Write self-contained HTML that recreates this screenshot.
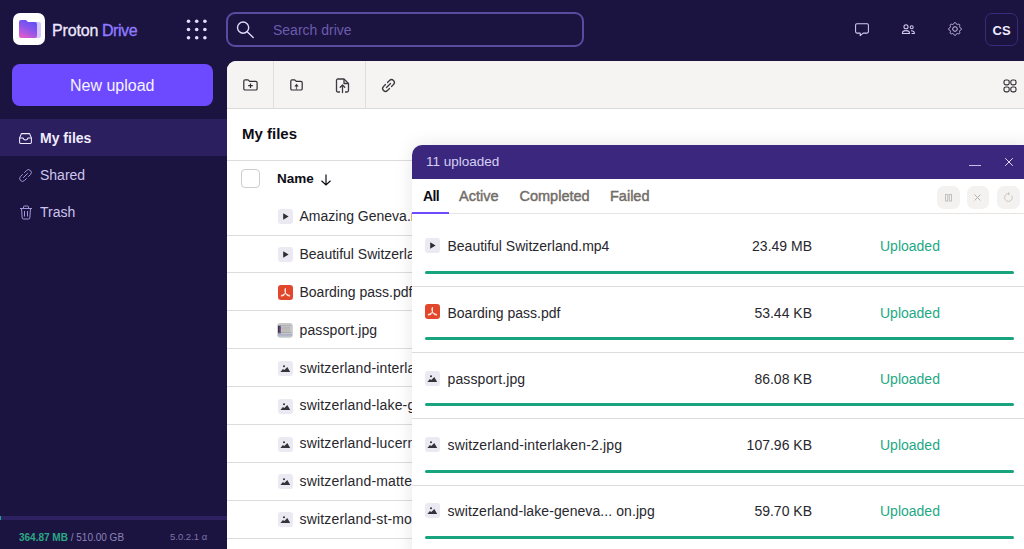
<!DOCTYPE html>
<html><head><meta charset="utf-8">
<style>
*{box-sizing:border-box;margin:0;padding:0}
html,body{width:1024px;height:549px;overflow:hidden;background:#1b1340;font-family:"Liberation Sans",sans-serif;}
.abs{position:absolute}
.t{position:absolute;white-space:nowrap;line-height:1}
svg{position:absolute;overflow:visible}
</style></head><body>
<!-- HEADER -->
<div class="abs" style="left:13px;top:13px;width:32px;height:32px;background:#fff;border-radius:7px"></div>
<svg style="left:19px;top:20px" width="22" height="18" viewBox="0 0 22 18">
  <defs>
    <linearGradient id="lg1" x1="0.75" y1="0" x2="0.25" y2="1">
      <stop offset="0" stop-color="#5d4ff8"/><stop offset="0.5" stop-color="#8f55ea"/><stop offset="1" stop-color="#e05ccc"/>
    </linearGradient>
  </defs>
  <rect x="3" y="2" width="19" height="16" rx="2" fill="#d7c6ff"/>
  <path d="M0 2 Q0 0 2 0 H7 L9 2 H16 Q18 2 18 4 V16 Q18 18 16 18 H2 Q0 18 0 16 Z" fill="url(#lg1)"/>
</svg>
<div class="t" style="left:52px;top:22.5px;font-size:16px;color:#ece8ff;letter-spacing:-0.15px;-webkit-text-stroke:0.3px #ece8ff">Proton</div>
<div class="t" style="left:102px;top:22.5px;font-size:16px;color:#8f7bff;letter-spacing:-0.45px;-webkit-text-stroke:0.35px #8f7bff">Drive</div>
<!-- app grid dots -->
<svg style="left:186px;top:19px" width="22" height="21">
  <g fill="#e4defc">
    <circle cx="2.5" cy="2.3" r="1.8"/><circle cx="10.7" cy="2.3" r="1.8"/><circle cx="18.9" cy="2.3" r="1.8"/>
    <circle cx="2.5" cy="10.5" r="1.8"/><circle cx="10.7" cy="10.5" r="1.8"/><circle cx="18.9" cy="10.5" r="1.8"/>
    <circle cx="2.5" cy="18.7" r="1.8"/><circle cx="10.7" cy="18.7" r="1.8"/><circle cx="18.9" cy="18.7" r="1.8"/>
  </g>
</svg>
<!-- search -->
<div class="abs" style="left:226px;top:12px;width:358px;height:35px;border:2px solid #5a4ba0;border-radius:9px"></div>
<svg style="left:236px;top:20px" width="20" height="20" viewBox="0 0 20 20">
  <circle cx="7.1" cy="7.6" r="5.6" fill="none" stroke="#e0daf8" stroke-width="1.4"/>
  <path d="M11.2 11.7 L17.2 17.6" stroke="#e0daf8" stroke-width="1.4" stroke-linecap="round"/>
</svg>
<div class="t" style="left:273px;top:23px;font-size:14px;color:#6b5cae">Search drive</div>
<!-- right icons -->
<svg style="left:850px;top:17px" width="70" height="25" viewBox="0 0 70 25">
  <g fill="none" stroke="#d3cbf0" stroke-width="1.05" stroke-linejoin="round">
    <path d="M6.9 6.8 H17.1 Q18.4 6.8 18.4 8.1 V14.8 Q18.4 16.1 17.1 16.1 H13.2 L10.2 18.7 V16.1 H6.9 Q5.6 16.1 5.6 14.8 V8.1 Q5.6 6.8 6.9 6.8 Z"/>
    <circle cx="56" cy="9.7" r="2.05"/>
    <circle cx="61.7" cy="10.2" r="1.5"/>
    <path d="M52.4 16.4 Q52.4 13.6 56 13.6 Q59.5 13.6 59.5 16.4 Z"/>
    <path d="M61 13.7 Q64.4 13.7 64.4 16.4 H61.5"/>
  </g>
</svg>
<svg style="left:948.2px;top:22.2px" width="14" height="14" viewBox="0 0 14 14">
  <g fill="none" stroke="#d3cbf0" stroke-width="1.0" stroke-linejoin="round">
    <path d="M13.35 7.00 L13.35 7.25 L13.33 7.50 L13.13 7.73 L12.88 7.93 L12.59 8.11 L12.30 8.27 L12.03 8.42 L11.80 8.56 L11.74 8.75 L11.67 8.93 L11.59 9.11 L11.50 9.29 L11.56 9.55 L11.65 9.85 L11.74 10.17 L11.81 10.50 L11.85 10.82 L11.83 11.12 L11.66 11.31 L11.49 11.49 L11.31 11.66 L11.12 11.83 L10.82 11.85 L10.50 11.81 L10.17 11.74 L9.85 11.65 L9.55 11.56 L9.29 11.50 L9.11 11.59 L8.93 11.67 L8.75 11.74 L8.56 11.80 L8.42 12.03 L8.27 12.30 L8.11 12.59 L7.93 12.88 L7.73 13.13 L7.50 13.33 L7.25 13.35 L7.00 13.35 L6.75 13.35 L6.50 13.33 L6.27 13.13 L6.07 12.88 L5.89 12.59 L5.73 12.30 L5.58 12.03 L5.44 11.80 L5.25 11.74 L5.07 11.67 L4.89 11.59 L4.71 11.50 L4.45 11.56 L4.15 11.65 L3.83 11.74 L3.50 11.81 L3.18 11.85 L2.88 11.83 L2.69 11.66 L2.51 11.49 L2.34 11.31 L2.17 11.12 L2.15 10.82 L2.19 10.50 L2.26 10.17 L2.35 9.85 L2.44 9.55 L2.50 9.29 L2.41 9.11 L2.33 8.93 L2.26 8.75 L2.20 8.56 L1.97 8.42 L1.70 8.27 L1.41 8.11 L1.12 7.93 L0.87 7.73 L0.67 7.50 L0.65 7.25 L0.65 7.00 L0.65 6.75 L0.67 6.50 L0.87 6.27 L1.12 6.07 L1.41 5.89 L1.70 5.73 L1.97 5.58 L2.20 5.44 L2.26 5.25 L2.33 5.07 L2.41 4.89 L2.50 4.71 L2.44 4.45 L2.35 4.15 L2.26 3.83 L2.19 3.50 L2.15 3.18 L2.17 2.88 L2.34 2.69 L2.51 2.51 L2.69 2.34 L2.88 2.17 L3.18 2.15 L3.50 2.19 L3.83 2.26 L4.15 2.35 L4.45 2.44 L4.71 2.50 L4.89 2.41 L5.07 2.33 L5.25 2.26 L5.44 2.20 L5.58 1.97 L5.73 1.70 L5.89 1.41 L6.07 1.12 L6.27 0.87 L6.50 0.67 L6.75 0.65 L7.00 0.65 L7.25 0.65 L7.50 0.67 L7.73 0.87 L7.93 1.12 L8.11 1.41 L8.27 1.70 L8.42 1.97 L8.56 2.20 L8.75 2.26 L8.93 2.33 L9.11 2.41 L9.29 2.50 L9.55 2.44 L9.85 2.35 L10.17 2.26 L10.50 2.19 L10.82 2.15 L11.12 2.17 L11.31 2.34 L11.49 2.51 L11.66 2.69 L11.83 2.88 L11.85 3.18 L11.81 3.50 L11.74 3.83 L11.65 4.15 L11.56 4.45 L11.50 4.71 L11.59 4.89 L11.67 5.07 L11.74 5.25 L11.80 5.44 L12.03 5.58 L12.30 5.73 L12.59 5.89 L12.88 6.07 L13.13 6.27 L13.33 6.50 L13.35 6.75 L13.35 7.00Z"/>
    <circle cx="7" cy="7" r="2.3"/>
  </g>
</svg>
<div class="abs" style="left:985px;top:13px;width:33px;height:33px;border:1.2px solid #3a2b7c;border-radius:7px"></div>
<div class="t" style="left:992.5px;top:23.6px;font-size:13px;font-weight:700;color:#f0ecff">CS</div>

<!-- SIDEBAR -->
<div class="abs" style="left:12px;top:64px;width:201px;height:42px;background:#6d4aff;border-radius:8px"></div>
<div class="t" style="left:70px;top:78px;font-size:16px;color:#f6f4ff">New upload</div>
<div class="abs" style="left:0;top:119px;width:227px;height:37px;background:#2b1f5f"></div>
<svg style="left:18.8px;top:133px" width="13" height="11" viewBox="0 0 13 11">
  <g fill="none" stroke="#f0ecff" stroke-width="1.05" stroke-linejoin="round">
    <path d="M0.6 5 L2.4 0.6 H10.6 L12.4 5 V9.3 Q12.4 10.4 11.3 10.4 H1.7 Q0.6 10.4 0.6 9.3 Z"/>
    <path d="M0.6 5 H4.2 Q4.3 6.9 6.5 6.9 Q8.7 6.9 8.8 5 H12.4"/>
  </g>
</svg>
<div class="t" style="left:40px;top:131px;font-size:14px;font-weight:700;color:#f0ecff">My files</div>
<svg style="left:18px;top:168px" width="15" height="15" viewBox="0 0 15 15">
  <g fill="none" stroke="#a297d8" stroke-width="1.0" stroke-linecap="round">
    <path d="M6.5 4.5 L8.5 2.5 Q10.5 0.5 12.5 2.5 Q14.5 4.5 12.5 6.5 L10.5 8.5"/>
    <path d="M8.5 10.5 L6.5 12.5 Q4.5 14.5 2.5 12.5 Q0.5 10.5 2.5 8.5 L4.5 6.5"/>
    <path d="M5.5 9.5 L9.5 5.5"/>
  </g>
</svg>
<div class="t" style="left:40px;top:168px;font-size:14px;color:#cdc5ee">Shared</div>
<svg style="left:19px;top:204.6px" width="14" height="15" viewBox="0 0 14 15">
  <g fill="none" stroke="#a297d8" stroke-width="1.0" stroke-linejoin="round">
    <path d="M1 3.5 H13"/>
    <path d="M4.5 3.5 V2 Q4.5 1 5.5 1 H8.5 Q9.5 1 9.5 2 V3.5"/>
    <path d="M2.5 3.5 L3.2 13 Q3.3 14 4.3 14 H9.7 Q10.7 14 10.8 13 L11.5 3.5"/>
    <path d="M5.5 6 V11.5 M8.5 6 V11.5"/>
  </g>
</svg>
<div class="t" style="left:40px;top:205px;font-size:14px;color:#cdc5ee">Trash</div>
<!-- storage -->
<div class="abs" style="left:0;top:516px;width:227px;height:4px;background:#2d2162"></div>
<div class="abs" style="left:0;top:516px;width:1.3px;height:4px;background:#1ea885"></div>
<div class="t" style="left:19px;top:533px;font-size:10px;color:#8d84b8"><b style="color:#2aa884">364.87 MB</b> / 510.00 GB</div>
<div class="t" style="left:170px;top:532.2px;font-size:9.5px;color:#7d73ab">5.0.2.1 α</div>

<!-- MAIN -->
<div class="abs" style="left:227px;top:61.4px;width:797px;height:488px;background:#fff;border-top-left-radius:9px;overflow:hidden">
  <div class="abs" style="left:0;top:0;width:797px;height:48px;background:#f5f4f2;border-bottom:1px solid #dcd9d6"></div>
  <div class="abs" style="left:46px;top:0;width:1px;height:48px;background:#e0ddda"></div>
  <div class="abs" style="left:138px;top:0;width:1px;height:48px;background:#e0ddda"></div>
</div>
<!-- toolbar icons -->
<svg style="left:243px;top:79px" width="15" height="12" viewBox="0 0 15 12">
  <g fill="none" stroke="#2e2d33" stroke-width="1.2" stroke-linejoin="round">
    <path d="M0.8 2.1 Q0.8 0.8 2.1 0.8 H4.6 Q5.3 0.8 5.8 1.4 L6.6 2.3 H12.8 Q14.1 2.3 14.1 3.6 V9.7 Q14.1 11 12.8 11 H2.1 Q0.8 11 0.8 9.7 Z"/>
    <path d="M7.5 4.5 V9 M5.2 6.7 H9.8"/>
  </g>
</svg>
<svg style="left:290px;top:79px" width="13" height="12" viewBox="0 0 13 12">
  <g fill="none" stroke="#2e2d33" stroke-width="1.2" stroke-linejoin="round">
    <path d="M0.8 2.1 Q0.8 0.8 2.1 0.8 H4.2 Q4.9 0.8 5.4 1.4 L6.2 2.3 H10.9 Q12.2 2.3 12.2 3.6 V9.7 Q12.2 11 10.9 11 H2.1 Q0.8 11 0.8 9.7 Z"/>
  </g>
  <path d="M6.5 11 V7" stroke="#6a696e" stroke-width="1.2"/>
  <path d="M4.3 7.6 L6.5 4.8 L8.7 7.6 Z" fill="#2e2d33"/>
</svg>
<svg style="left:335px;top:78px" width="15" height="15" viewBox="0 0 15 15">
  <g fill="none" stroke="#3b3a40" stroke-width="1.3" stroke-linejoin="round">
    <path d="M5 14 H3 Q1.5 14 1.5 12.5 V2.5 Q1.5 1 3 1 H9 L13.5 5.5 V12.5 Q13.5 14 12 14 H10"/>
    <path d="M9 1 V5.5 H13.5"/>
    <path d="M7.5 14.5 V7 M5.2 9.3 L7.5 7 L9.8 9.3" stroke-linecap="round"/>
  </g>
</svg>
<svg style="left:381px;top:78px" width="15" height="15" viewBox="0 0 15 15">
  <g fill="none" stroke="#3b3a40" stroke-width="1.3" stroke-linecap="round">
    <path d="M6.5 4.5 L8.5 2.5 Q10.5 0.5 12.5 2.5 Q14.5 4.5 12.5 6.5 L10.5 8.5"/>
    <path d="M8.5 10.5 L6.5 12.5 Q4.5 14.5 2.5 12.5 Q0.5 10.5 2.5 8.5 L4.5 6.5"/>
    <path d="M5.5 9.5 L9.5 5.5"/>
  </g>
</svg>
<!-- grid icon right -->
<svg style="left:1003.3px;top:78.6px" width="14" height="14" viewBox="0 0 14 14">
  <g fill="none" stroke="#2e2d33" stroke-width="1.15">
    <rect x="1" y="1" width="5.2" height="4.8" rx="1.8"/><rect x="7.8" y="1" width="5.2" height="4.8" rx="1.8"/>
    <rect x="1" y="8" width="5.2" height="4.8" rx="1.8"/><rect x="7.8" y="8" width="5.2" height="4.8" rx="1.8"/>
  </g>
</svg>

<div class="t" style="left:242px;top:126px;font-size:15px;font-weight:700;color:#0c0c14">My files</div>
<div class="abs" style="left:227px;top:160px;width:797px;height:1px;background:#dedbd8"></div>
<div class="abs" style="left:240.5px;top:168.5px;width:19px;height:19.5px;border:1px solid #cfccc9;border-radius:4px;background:#fff"></div>
<div class="t" style="left:277px;top:172px;font-size:13.5px;font-weight:700;color:#0c0c14">Name</div>
<svg style="left:320px;top:174px" width="12" height="12" viewBox="0 0 12 12">
  <path d="M6 0.5 V11 M1.5 6.8 L6 11 L10.5 6.8" fill="none" stroke="#0c0c14" stroke-width="1.2"/>
</svg>

<!--ROWS-->
<div class="abs" style="left:277.7px;top:209.3px;width:15px;height:15px;background:#ebeaf3;border-radius:3px"></div><svg style="left:277.7px;top:209.3px" width="15" height="15" viewBox="0 0 15 15"><path d="M5.2 4.3 L10.6 7.5 L5.2 10.7 Z" fill="#2d2c33"/></svg>
<div class="t" style="left:299.5px;top:209.05px;font-size:14px;color:#28272d">Amazing Geneva.mp4</div>
<div class="abs" style="left:227px;top:235px;width:797px;height:1px;background:#dedbd8"></div>
<div class="abs" style="left:277.7px;top:247.18px;width:15px;height:15px;background:#ebeaf3;border-radius:3px"></div><svg style="left:277.7px;top:247.18px" width="15" height="15" viewBox="0 0 15 15"><path d="M5.2 4.3 L10.6 7.5 L5.2 10.7 Z" fill="#2d2c33"/></svg>
<div class="t" style="left:299.5px;top:246.92px;font-size:14px;color:#28272d">Beautiful Switzerland.mp4</div>
<div class="abs" style="left:227px;top:272px;width:797px;height:1px;background:#dedbd8"></div>
<div class="abs" style="left:277.7px;top:285.05px;width:15px;height:15px;background:#e2472b;border-radius:3px"></div><svg style="left:277.7px;top:285.05px" width="15" height="15" viewBox="0 0 15 15"><g fill="none" stroke="#fbe3dc" stroke-width="1.2" stroke-linecap="round"><path d="M7.4 3.6 V8.5 L3.3 10.9 M7.4 8.5 L11.6 10.9"/><path d="M7.4 4 Q6.6 5.6 7.4 7 M3.6 10.3 Q4.9 11.2 5.8 10.2 M11.2 10.4 Q9.9 11.1 9.1 10"/></g></svg>
<div class="t" style="left:299.5px;top:284.80px;font-size:14px;color:#28272d">Boarding pass.pdf</div>
<div class="abs" style="left:227px;top:310px;width:797px;height:1px;background:#dedbd8"></div>
<svg style="left:277.2px;top:322.63px" width="16" height="15" viewBox="0 0 16 15"><defs><clipPath id="tc"><rect x="0.2" y="0" width="15.6" height="14.8" rx="3"/></clipPath></defs>
<g clip-path="url(#tc)"><rect width="16" height="15" fill="#c9c8c9"/>
<rect x="4" y="2" width="10" height="1.2" fill="#b2b1b3"/><rect x="4" y="4.5" width="9" height="1" fill="#a9a8aa"/><rect x="5" y="6.5" width="8" height="1.2" fill="#b5b4b6"/><rect x="4" y="8.8" width="10" height="1" fill="#a3a2a5"/>
<rect x="1" y="2.5" width="3" height="8" fill="#6a6a8a"/><rect x="1.2" y="3" width="1.3" height="6.5" fill="#26245a"/><rect x="2.5" y="4.5" width="1" height="4" fill="#9a3a5a"/>
<rect x="1" y="11.3" width="14" height="1.2" fill="#9fa6c9"/><rect x="2" y="13" width="12" height="0.8" fill="#b8c6d0"/></g></svg>
<div class="t" style="left:299.5px;top:322.67px;font-size:14px;letter-spacing:0.12px;color:#28272d">passport.jpg</div>
<div class="abs" style="left:227px;top:348px;width:797px;height:1px;background:#dedbd8"></div>
<div class="abs" style="left:277.7px;top:360.8px;width:15px;height:15px;background:#ebeaf3;border-radius:3px"></div><svg style="left:277.7px;top:360.8px" width="15" height="15" viewBox="0 0 15 15"><circle cx="6" cy="5.2" r="1.05" fill="#34333a"/><path d="M2.4 10.9 L4.9 7.9 L6.3 9 L9.3 6 L12.2 10.9 Z" fill="#34333a"/></svg>
<div class="t" style="left:299.5px;top:360.55px;font-size:14px;letter-spacing:0.17px;color:#28272d">switzerland-interlaken-2.jpg</div>
<div class="abs" style="left:227px;top:386px;width:797px;height:1px;background:#dedbd8"></div>
<div class="abs" style="left:277.7px;top:398.68px;width:15px;height:15px;background:#ebeaf3;border-radius:3px"></div><svg style="left:277.7px;top:398.68px" width="15" height="15" viewBox="0 0 15 15"><circle cx="6" cy="5.2" r="1.05" fill="#34333a"/><path d="M2.4 10.9 L4.9 7.9 L6.3 9 L9.3 6 L12.2 10.9 Z" fill="#34333a"/></svg>
<div class="t" style="left:299.5px;top:398.42px;font-size:14px;letter-spacing:0.17px;color:#28272d">switzerland-lake-geneva.jpg</div>
<div class="abs" style="left:227px;top:424px;width:797px;height:1px;background:#dedbd8"></div>
<div class="abs" style="left:277.7px;top:436.55px;width:15px;height:15px;background:#ebeaf3;border-radius:3px"></div><svg style="left:277.7px;top:436.55px" width="15" height="15" viewBox="0 0 15 15"><circle cx="6" cy="5.2" r="1.05" fill="#34333a"/><path d="M2.4 10.9 L4.9 7.9 L6.3 9 L9.3 6 L12.2 10.9 Z" fill="#34333a"/></svg>
<div class="t" style="left:299.5px;top:436.30px;font-size:14px;letter-spacing:0.17px;color:#28272d">switzerland-lucerne.jpg</div>
<div class="abs" style="left:227px;top:462px;width:797px;height:1px;background:#dedbd8"></div>
<div class="abs" style="left:277.7px;top:474.43px;width:15px;height:15px;background:#ebeaf3;border-radius:3px"></div><svg style="left:277.7px;top:474.43px" width="15" height="15" viewBox="0 0 15 15"><circle cx="6" cy="5.2" r="1.05" fill="#34333a"/><path d="M2.4 10.9 L4.9 7.9 L6.3 9 L9.3 6 L12.2 10.9 Z" fill="#34333a"/></svg>
<div class="t" style="left:299.5px;top:474.17px;font-size:14px;letter-spacing:0.17px;color:#28272d">switzerland-matterhorn.jpg</div>
<div class="abs" style="left:227px;top:500px;width:797px;height:1px;background:#dedbd8"></div>
<div class="abs" style="left:277.7px;top:512.3px;width:15px;height:15px;background:#ebeaf3;border-radius:3px"></div><svg style="left:277.7px;top:512.3px" width="15" height="15" viewBox="0 0 15 15"><circle cx="6" cy="5.2" r="1.05" fill="#34333a"/><path d="M2.4 10.9 L4.9 7.9 L6.3 9 L9.3 6 L12.2 10.9 Z" fill="#34333a"/></svg>
<div class="t" style="left:299.5px;top:512.05px;font-size:14px;letter-spacing:0.17px;color:#28272d">switzerland-st-moritz.jpg</div>
<div class="abs" style="left:227px;top:538px;width:797px;height:1px;background:#dedbd8"></div>
<div class="abs" style="left:412px;top:145px;width:620px;height:420px;background:#fff;border-radius:10px 0 0 0;box-shadow:0 0 18px rgba(0,0,0,0.10);overflow:hidden">
<div class="abs" style="left:0;top:0;width:620px;height:34px;background:#3b287e"></div>
<div class="t" style="left:14px;top:10px;font-size:13.5px;color:#d6d0f4">11 uploaded</div>
</div>
<div class="abs" style="left:969px;top:165.2px;width:11.5px;height:1.3px;background:#c5bdea"></div>
<svg style="left:1004px;top:157px" width="10" height="10" viewBox="0 0 10 10"><path d="M1.2 1.2 L8.8 8.8 M8.8 1.2 L1.2 8.8" stroke="#e0dbf7" stroke-width="1.0"/></svg>
<div class="t" style="left:423px;top:189.2px;font-size:14px;font-weight:700;letter-spacing:-0.6px;color:#0c0c14">All</div>
<div class="t" style="left:459px;top:188.9px;font-size:14.5px;color:#726d68;-webkit-text-stroke:0.45px #726d68">Active</div>
<div class="t" style="left:519.5px;top:188.9px;font-size:14.5px;color:#726d68;-webkit-text-stroke:0.45px #726d68">Completed</div>
<div class="t" style="left:610px;top:188.9px;font-size:14.5px;color:#726d68;-webkit-text-stroke:0.45px #726d68">Failed</div>
<div class="abs" style="left:412px;top:213px;width:612px;height:1px;background:#e6e3e0"></div>
<div class="abs" style="left:412px;top:212px;width:37px;height:2px;background:#6d4aff"></div>
<div class="abs" style="left:937px;top:185.5px;width:22.5px;height:23px;background:#f3f2f0;border-radius:7px"></div>
<div class="abs" style="left:966.5px;top:185.5px;width:22.5px;height:23px;background:#f3f2f0;border-radius:7px"></div>
<div class="abs" style="left:997px;top:185.5px;width:22.5px;height:23px;background:#f3f2f0;border-radius:7px"></div>
<svg style="left:945px;top:193.5px" width="8" height="8"><rect x="0.5" y="0.5" width="2.2" height="6.5" fill="none" stroke="#c2c0bd" stroke-width="1"/><rect x="4.3" y="0.5" width="2.2" height="6.5" fill="none" stroke="#c2c0bd" stroke-width="1"/></svg>
<svg style="left:974px;top:193.5px" width="7" height="7"><path d="M0.5 0.5 L6.5 6.5 M6.5 0.5 L0.5 6.5" stroke="#b5b3b0" stroke-width="1"/></svg>
<svg style="left:1002.5px;top:192px" width="11" height="11" viewBox="0 0 13 13"><path d="M10.3 4 A4.6 4.6 0 1 1 6.5 1.9" fill="none" stroke="#c2c0bd" stroke-width="1"/><path d="M6 0 L8.3 2 L6 3.8 Z" fill="#c2c0bd"/></svg>
<div class="abs" style="left:425px;top:237.9px;width:15px;height:15px;background:#ebeaf3;border-radius:3px"></div><svg style="left:425px;top:237.9px" width="15" height="15" viewBox="0 0 15 15"><path d="M5.2 4.3 L10.6 7.5 L5.2 10.7 Z" fill="#2d2c33"/></svg>
<div class="t" style="left:447.5px;top:239.25px;font-size:14px;color:#28272d">Beautiful Switzerland.mp4</div>
<div class="t" style="left:612px;width:200px;text-align:right;top:239.25px;font-size:14px;color:#28272d">23.49 MB</div>
<div class="t" style="left:880px;top:239.25px;font-size:14px;color:#1ea885">Uploaded</div>
<div class="abs" style="left:425px;top:270.60px;width:588.5px;height:3px;background:#18a47f;border-radius:2px"></div>
<div class="abs" style="left:412px;top:286px;width:612px;height:1px;background:#dedbd8"></div>
<div class="abs" style="left:425px;top:304.2px;width:15px;height:15px;background:#e2472b;border-radius:3px"></div><svg style="left:425px;top:304.2px" width="15" height="15" viewBox="0 0 15 15"><g fill="none" stroke="#fbe3dc" stroke-width="1.2" stroke-linecap="round"><path d="M7.4 3.6 V8.5 L3.3 10.9 M7.4 8.5 L11.6 10.9"/><path d="M7.4 4 Q6.6 5.6 7.4 7 M3.6 10.3 Q4.9 11.2 5.8 10.2 M11.2 10.4 Q9.9 11.1 9.1 10"/></g></svg>
<div class="t" style="left:447.5px;top:305.55px;font-size:14px;color:#28272d">Boarding pass.pdf</div>
<div class="t" style="left:612px;width:200px;text-align:right;top:305.55px;font-size:14px;color:#28272d">53.44 KB</div>
<div class="t" style="left:880px;top:305.55px;font-size:14px;color:#1ea885">Uploaded</div>
<div class="abs" style="left:425px;top:336.90px;width:588.5px;height:3px;background:#18a47f;border-radius:2px"></div>
<div class="abs" style="left:412px;top:352px;width:612px;height:1px;background:#dedbd8"></div>
<div class="abs" style="left:425px;top:370.5px;width:15px;height:15px;background:#ebeaf3;border-radius:3px"></div><svg style="left:425px;top:370.5px" width="15" height="15" viewBox="0 0 15 15"><circle cx="6" cy="5.2" r="1.05" fill="#34333a"/><path d="M2.4 10.9 L4.9 7.9 L6.3 9 L9.3 6 L12.2 10.9 Z" fill="#34333a"/></svg>
<div class="t" style="left:447.5px;top:371.85px;font-size:14px;letter-spacing:0.12px;color:#28272d">passport.jpg</div>
<div class="t" style="left:612px;width:200px;text-align:right;top:371.85px;font-size:14px;color:#28272d">86.08 KB</div>
<div class="t" style="left:880px;top:371.85px;font-size:14px;color:#1ea885">Uploaded</div>
<div class="abs" style="left:425px;top:403.20px;width:588.5px;height:3px;background:#18a47f;border-radius:2px"></div>
<div class="abs" style="left:412px;top:418px;width:612px;height:1px;background:#dedbd8"></div>
<div class="abs" style="left:425px;top:436.8px;width:15px;height:15px;background:#ebeaf3;border-radius:3px"></div><svg style="left:425px;top:436.8px" width="15" height="15" viewBox="0 0 15 15"><circle cx="6" cy="5.2" r="1.05" fill="#34333a"/><path d="M2.4 10.9 L4.9 7.9 L6.3 9 L9.3 6 L12.2 10.9 Z" fill="#34333a"/></svg>
<div class="t" style="left:447.5px;top:438.15px;font-size:14px;letter-spacing:0.15px;color:#28272d">switzerland-interlaken-2.jpg</div>
<div class="t" style="left:612px;width:200px;text-align:right;top:438.15px;font-size:14px;color:#28272d">107.96 KB</div>
<div class="t" style="left:880px;top:438.15px;font-size:14px;color:#1ea885">Uploaded</div>
<div class="abs" style="left:425px;top:469.50px;width:588.5px;height:3px;background:#18a47f;border-radius:2px"></div>
<div class="abs" style="left:412px;top:485px;width:612px;height:1px;background:#dedbd8"></div>
<div class="abs" style="left:425px;top:503.1px;width:15px;height:15px;background:#ebeaf3;border-radius:3px"></div><svg style="left:425px;top:503.1px" width="15" height="15" viewBox="0 0 15 15"><circle cx="6" cy="5.2" r="1.05" fill="#34333a"/><path d="M2.4 10.9 L4.9 7.9 L6.3 9 L9.3 6 L12.2 10.9 Z" fill="#34333a"/></svg>
<div class="t" style="left:447.5px;top:504.45px;font-size:14px;letter-spacing:0.08px;color:#28272d">switzerland-lake-geneva... on.jpg</div>
<div class="t" style="left:612px;width:200px;text-align:right;top:504.45px;font-size:14px;color:#28272d">59.70 KB</div>
<div class="t" style="left:880px;top:504.45px;font-size:14px;color:#1ea885">Uploaded</div>
<div class="abs" style="left:425px;top:535.80px;width:588.5px;height:3px;background:#18a47f;border-radius:2px"></div>
<!--/ROWS-->

</body></html>
